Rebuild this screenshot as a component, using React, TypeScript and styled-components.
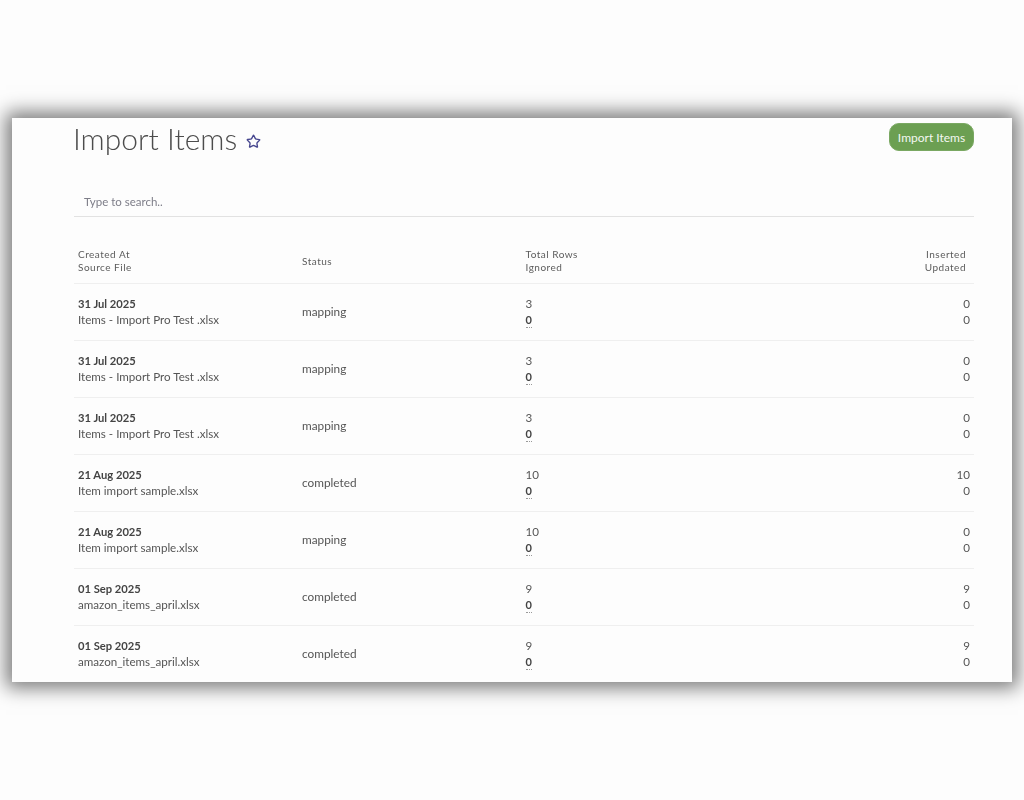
import styled, { createGlobalStyle } from 'styled-components';
import { LuStar } from 'react-icons/lu';

const imports = [
    { date: '31 Jul 2025', file: 'Items - Import Pro Test .xlsx', status: 'mapping', total: 3, inserted: 0 },
    { date: '31 Jul 2025', file: 'Items - Import Pro Test .xlsx', status: 'mapping', total: 3, inserted: 0 },
    { date: '31 Jul 2025', file: 'Items - Import Pro Test .xlsx', status: 'mapping', total: 3, inserted: 0 },
    { date: '21 Aug 2025', file: 'Item import sample.xlsx', status: 'completed', total: 10, inserted: 10 },
    { date: '21 Aug 2025', file: 'Item import sample.xlsx', status: 'mapping', total: 10, inserted: 0 },
    { date: '01 Sep 2025', file: 'amazon_items_april.xlsx', status: 'completed', total: 9, inserted: 9 },
    { date: '01 Sep 2025', file: 'amazon_items_april.xlsx', status: 'completed', total: 9, inserted: 9 }
];

const GlobalStyle = createGlobalStyle`
    html, body {
        margin: 0;
        background: #fdfdfd;
    }
    body {
        font-family: "Lato", "Open Sans", sans-serif;
        color: #4a4a4a;
    }
`;

const Page = styled.div`
    height: 800px;
    padding: 118px 12px 0;
    box-sizing: border-box;
    overflow: hidden;
`;

const Card = styled.main`
    height: 564px;
    padding: 0 38px 0 61px;
    box-sizing: border-box;
    overflow: hidden;
    background: #fdfdfd;
    box-shadow: 0 0 18px 6px rgba(0, 0, 0, 0.52);
    filter: blur(0.45px);
`;

const TitleBar = styled.div`
    display: flex;
    align-items: flex-start;
    justify-content: space-between;
    height: 68px;
    padding-top: 5px;
    box-sizing: border-box;
`;

const TitleGroup = styled.div`
    display: flex;
    align-items: center;
    gap: 9px;
    margin-top: -7px;
    height: 44px;
`;

const Title = styled.h1`
    margin: 0;
    font-size: 30px;
    font-weight: 300;
    letter-spacing: 0;
    color: #4c4c4c;
`;

const Star = styled(LuStar)`
    width: 15px;
    height: 15px;
    margin-top: 6px;
    color: #47478f;
    stroke-width: 2.2;
`;

const ImportButton = styled.button`
    width: 85px;
    height: 28px;
    padding: 0;
    border: 1px solid #7aa862;
    border-radius: 10px;
    background: #6c9f52;
    color: #f4f8f1;
    font-family: inherit;
    font-size: 12px;
`;

const Search = styled.input`
    display: block;
    width: calc(100% - 1px);
    height: 31px;
    margin-left: 1px;
    padding: 0 10px;
    box-sizing: border-box;
    border: 0;
    border-bottom: 1px solid #e2e2e2;
    outline: 0;
    background: transparent;
    font-family: inherit;
    font-size: 11.5px;

    &::placeholder {
        color: #7d7d88;
        opacity: 1;
    }
`;

const Row = styled.div<{ $header?: boolean }>`
    display: grid;
    grid-template-columns: 224px 223.5px 1fr 1fr;
    align-items: center;
    height: ${({ $header }) => ($header ? '45px' : '57px')};
    margin-top: ${({ $header }) => ($header ? '22px' : '0')};
    margin-left: 1px;
    box-sizing: border-box;
    border-bottom: 1px solid #efefef;
`;

const Cell = styled.div<{ $right?: boolean; $header?: boolean }>`
    display: flex;
    flex-direction: column;
    padding: ${({ $right, $header }) => ($right ? ($header ? '0 8px 0 0' : '0 4px 0 0') : '0 0 0 4px')};
    text-align: ${({ $right }) => ($right ? 'right' : 'left')};
    align-items: ${({ $right }) => ($right ? 'flex-end' : 'flex-start')};
`;

const HeadLine = styled.span`
    font-size: 10px;
    line-height: 13px;
    letter-spacing: 0.5px;
    color: #5c5c5c;
`;

const DateText = styled.strong`
    font-size: 11.2px;
    line-height: 16px;
    font-weight: 700;
    color: #444444;
`;

const Value = styled.span`
    font-size: 11.6px;
    line-height: 16px;
    color: #555555;
`;

const StatusText = styled.span`
    font-size: 11.8px;
    margin-bottom: 2px;
    color: #555555;
`;

const IgnoredValue = styled.strong`
    font-size: 11px;
    line-height: 14px;
    margin-top: 1px;
    font-weight: 700;
    color: #444444;
    border-bottom: 1px dotted #999999;
`;

const App = () => (
    <Page>
        <GlobalStyle />
        <Card>
            <TitleBar>
                <TitleGroup>
                    <Title>Import Items</Title>
                    <Star />
                </TitleGroup>
                <ImportButton>Import Items</ImportButton>
            </TitleBar>
            <Search placeholder="Type to search.." />
            <Row $header>
                <Cell>
                    <HeadLine>Created At</HeadLine>
                    <HeadLine>Source File</HeadLine>
                </Cell>
                <Cell>
                    <HeadLine>Status</HeadLine>
                </Cell>
                <Cell>
                    <HeadLine>Total Rows</HeadLine>
                    <HeadLine>Ignored</HeadLine>
                </Cell>
                <Cell $right $header>
                    <HeadLine>Inserted</HeadLine>
                    <HeadLine>Updated</HeadLine>
                </Cell>
            </Row>
            {imports.map((item, index) => (
                <Row key={index}>
                    <Cell>
                        <DateText>{item.date}</DateText>
                        <Value>{item.file}</Value>
                    </Cell>
                    <Cell>
                        <StatusText>{item.status}</StatusText>
                    </Cell>
                    <Cell>
                        <Value>{item.total}</Value>
                        <IgnoredValue>0</IgnoredValue>
                    </Cell>
                    <Cell $right>
                        <Value>{item.inserted}</Value>
                        <Value>0</Value>
                    </Cell>
                </Row>
            ))}
        </Card>
    </Page>
);

export default App;
